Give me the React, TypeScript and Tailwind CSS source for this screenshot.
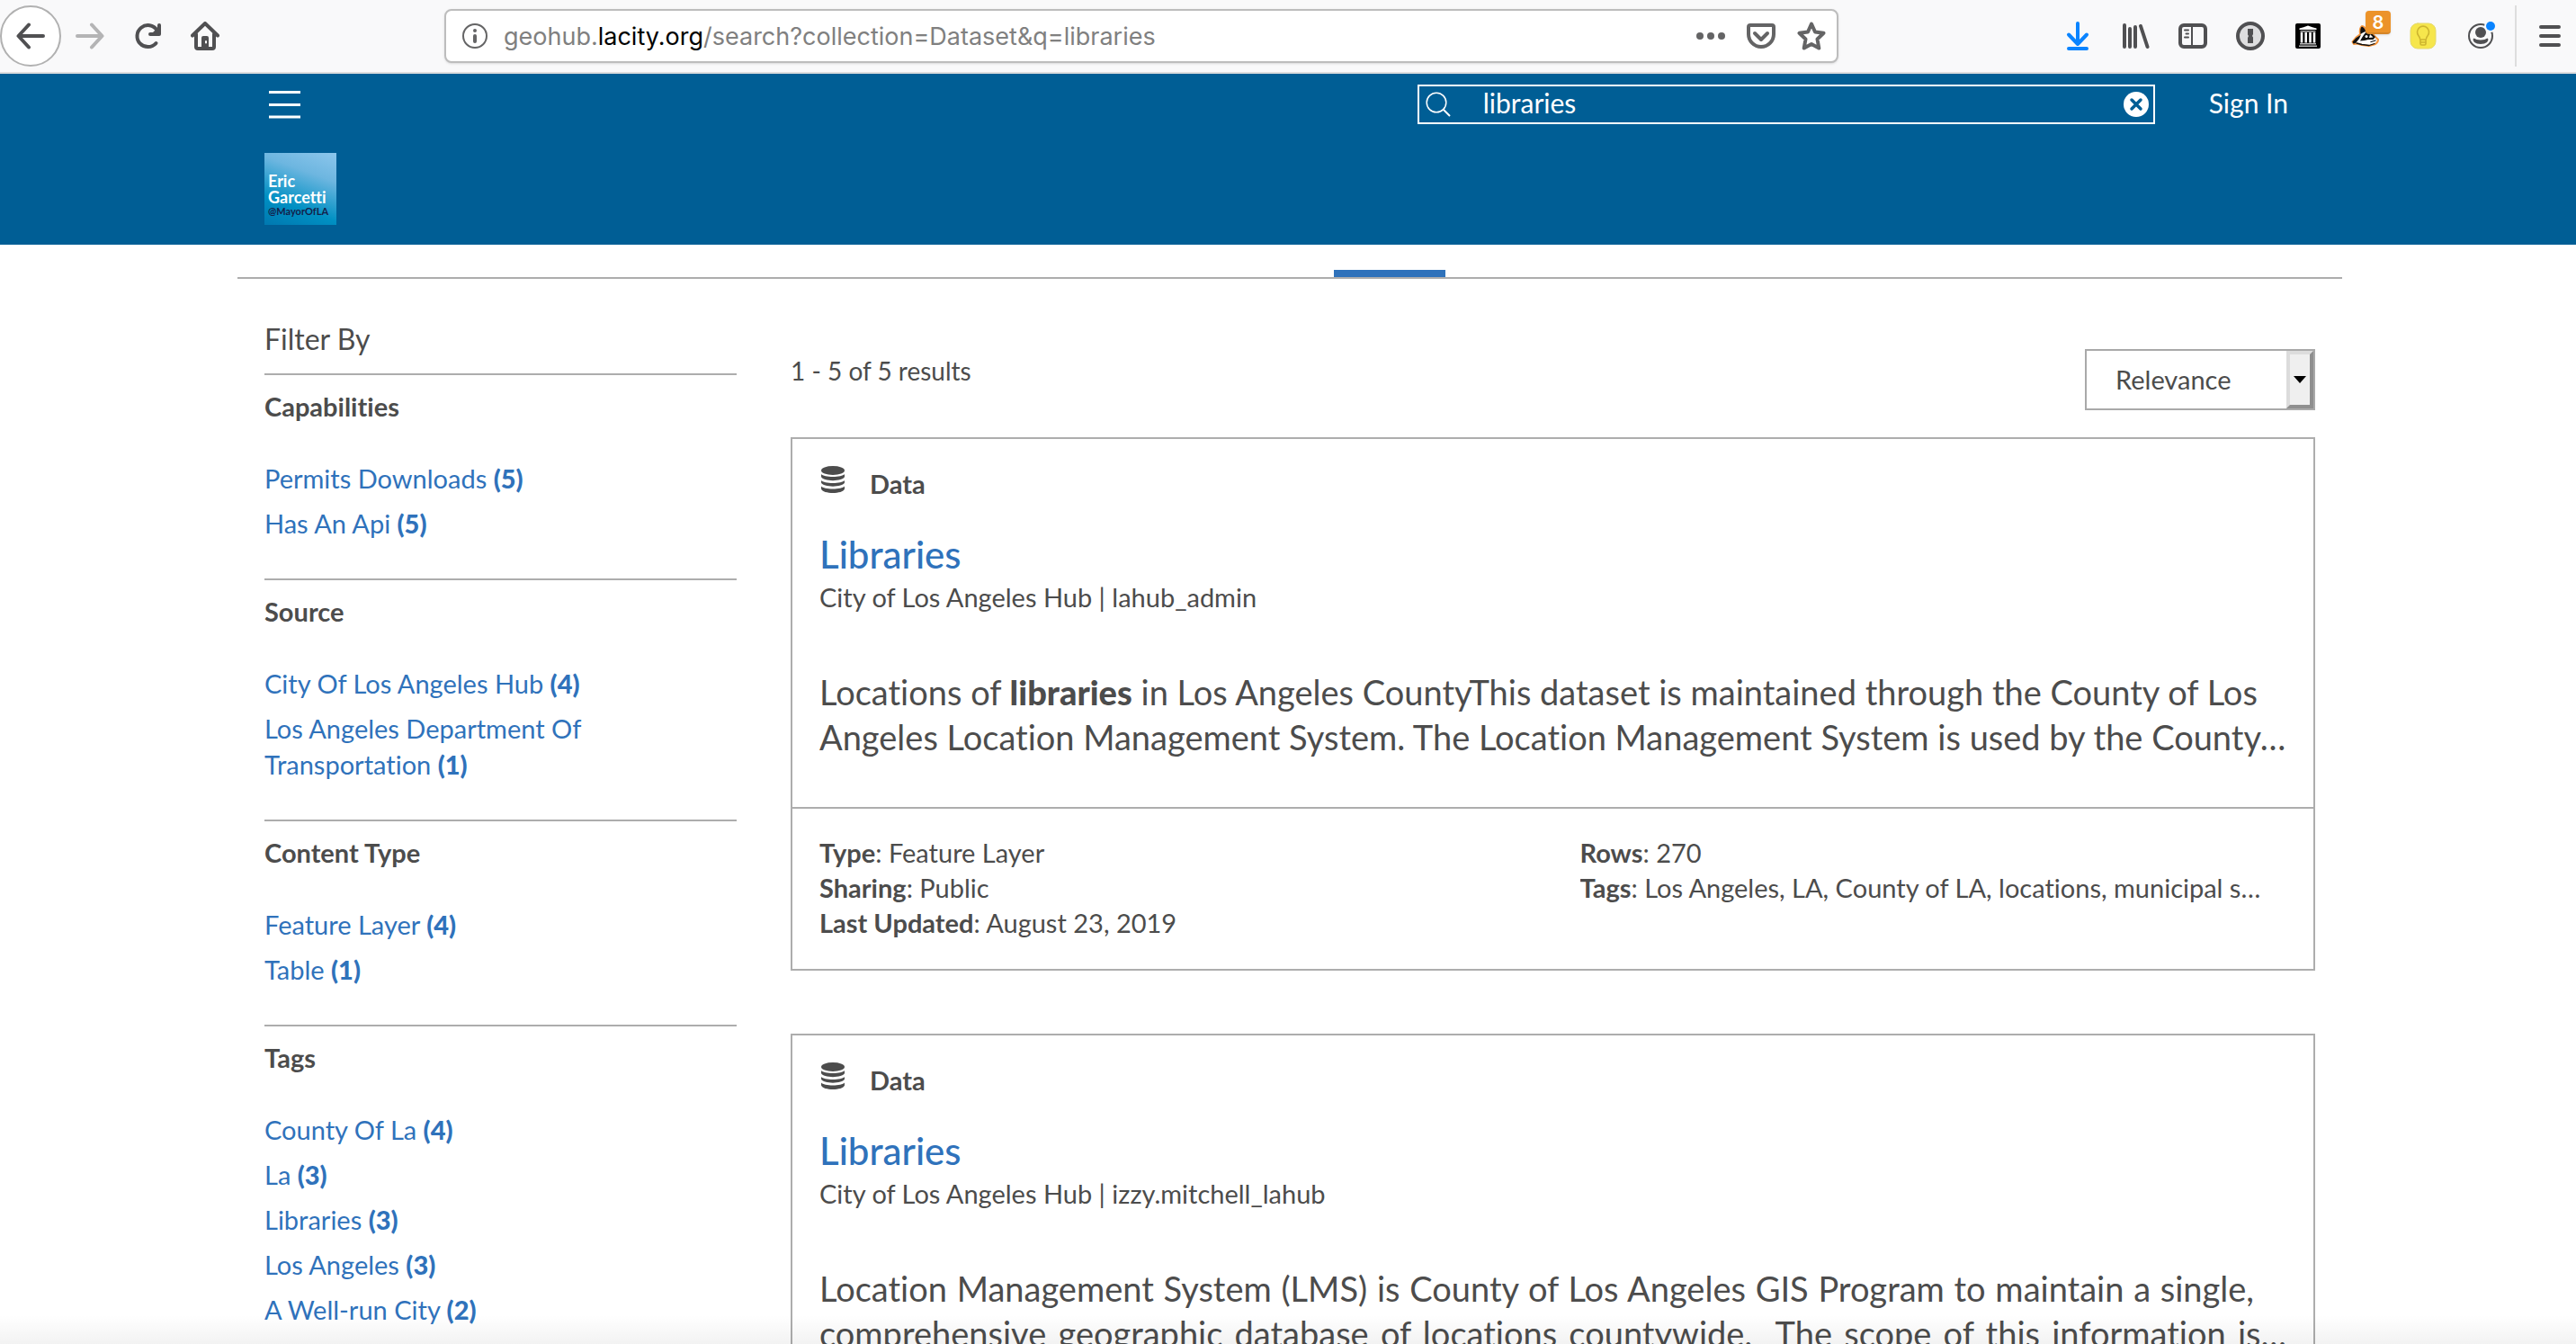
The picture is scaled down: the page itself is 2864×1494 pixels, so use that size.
import type { ReactNode } from "react";

type Facet = { title: string; items: { label: string; count: number }[] };

const facets: Facet[] = [
  {
    title: "Capabilities",
    items: [
      { label: "Permits Downloads", count: 5 },
      { label: "Has An Api", count: 5 },
    ],
  },
  {
    title: "Source",
    items: [
      { label: "City Of Los Angeles Hub", count: 4 },
      { label: "Los Angeles Department Of Transportation", count: 1 },
    ],
  },
  {
    title: "Content Type",
    items: [
      { label: "Feature Layer", count: 4 },
      { label: "Table", count: 1 },
    ],
  },
  {
    title: "Tags",
    items: [
      { label: "County Of La", count: 4 },
      { label: "La", count: 3 },
      { label: "Libraries", count: 3 },
      { label: "Los Angeles", count: 3 },
      { label: "A Well-run City", count: 2 },
    ],
  },
];

function ToolButton({ label, children }: { label: string; children: ReactNode }) {
  return (
    <button type="button" aria-label={label} className="relative flex h-[68px] w-16 shrink-0 items-center justify-center">
      {children}
    </button>
  );
}

function Icon({ children }: { children: ReactNode }) {
  return (
    <svg viewBox="0 0 32 32" className="size-8" fill="none" strokeLinecap="round" strokeLinejoin="round" aria-hidden="true">
      {children}
    </svg>
  );
}

function BrowserBar() {
  return (
    <div className="flex shrink-0 items-center border-b-2 border-[#dddddd] bg-[#f9f9fa] py-1.5">
      <button
        type="button"
        aria-label="Back"
        className="flex size-[68px] shrink-0 items-center justify-center rounded-full border-2 border-[#b1b1b1] bg-white"
      >
        <Icon>
          <path d="M30 16H3M14 3.500L2.500 16L14 28.500" stroke="#505052" strokeWidth="4" />
        </Icon>
      </button>
      <ToolButton label="Forward">
        <Icon>
          <path d="M2 16H29M18 3.500L29.500 16L18 28.500" stroke="#b4b4b5" strokeWidth="4" />
        </Icon>
      </ToolButton>
      <ToolButton label="Reload">
        <Icon>
          <path d="M25.500 24A12 12 0 1 1 26.500 9.500" stroke="#505052" strokeWidth="4" />
          <path d="M29 4V14H19" stroke="#505052" strokeWidth="4" />
          <path d="M29 5V14H20Z" fill="#505052" />
        </Icon>
      </ToolButton>
      <ToolButton label="Home">
        <Icon>
          <path d="M2 15.500L16 2L30 15.500" stroke="#505052" strokeWidth="4" />
          <path d="M6 14V28Q6 30 8 30H24Q26 30 26 28V14" stroke="#505052" strokeWidth="4" />
          <path d="M12 29V18Q12 16 14 16H18Q20 16 20 18V29Z" fill="#505052" />
          <path d="M17 22v1.500" stroke="#fff" strokeWidth="2" />
        </Icon>
      </ToolButton>
      <div className="w-[234px] shrink" />
      <div className="flex h-[60px] flex-1 items-center rounded-lg border-2 border-[#bdbdbd] bg-white pr-3 pl-[18px] shadow-sm">
        <svg viewBox="0 0 28 28" className="size-7 shrink-0" fill="none" aria-hidden="true">
          <circle cx="14" cy="14" r="13" stroke="#646465" strokeWidth="2" />
          <circle cx="14" cy="8" r="2" fill="#646465" />
          <path d="M14 14V20" stroke="#646465" strokeWidth="4" strokeLinecap="round" />
        </svg>
        <p className="ml-[18px] flex-1 pt-0.5 font-['Inter',sans-serif] text-[27px] leading-10 text-[#808080]">
          geohub.<span className="text-black">lacity.org</span>/search?collection=Dataset&amp;q=libraries
        </p>
        <div className="flex gap-6">
          <button type="button" aria-label="Page actions">
            <Icon>
              <circle cx="4" cy="16" r="4" fill="#646465" />
              <circle cx="16" cy="16" r="4" fill="#646465" />
              <circle cx="28" cy="16" r="4" fill="#646465" />
            </Icon>
          </button>
          <button type="button" aria-label="Save to Pocket">
            <Icon>
              <path d="M4 4H28Q30 4 30 6V14A14 14 0 0 1 2 14V6Q2 4 4 4Z" stroke="#646465" strokeWidth="4" />
              <path d="M9 13L16 20L23 13" stroke="#646465" strokeWidth="4" />
            </Icon>
          </button>
          <button type="button" aria-label="Bookmark">
            <Icon>
              <path
                d="M16 2.500L20 11.500L29.500 12.800L22.500 19.500L24.300 29.500L16 25L7.700 29.500L9.500 19.500L2.500 12.800L12 11.500Z"
                stroke="#646465"
                strokeWidth="4"
              />
            </Icon>
          </button>
        </div>
      </div>
      <div className="w-[234px] shrink" />
      <ToolButton label="Downloads">
        <Icon>
          <path d="M16 2V24M6 14.500L16 25L26 14.500M6 30H26" stroke="#0a84ff" strokeWidth="4" />
        </Icon>
      </ToolButton>
      <ToolButton label="Library">
        <Icon>
          <path d="M4 4V28M10 8V28M16 6V28M22 5L29.500 28" stroke="#505052" strokeWidth="4" />
        </Icon>
      </ToolButton>
      <ToolButton label="Sidebars">
        <Icon>
          <rect x="2" y="4" width="28" height="24" rx="4" stroke="#505052" strokeWidth="4" />
          <path d="M15 5V27" stroke="#505052" strokeWidth="2" />
          <path d="M7 9.500H11M8.500 13.500H11M7 17.500H11" stroke="#505052" strokeWidth="2" />
        </Icon>
      </ToolButton>
      <ToolButton label="Password manager">
        <Icon>
          <circle cx="16" cy="16" r="14" fill="#dededf" stroke="#505052" strokeWidth="4" />
          <path d="M13 8H19V14L18 16L19 17.500V24H13V18L14 16L13 14.500Z" fill="#505052" />
        </Icon>
      </ToolButton>
      <ToolButton label="Web archive">
        <Icon>
          <rect x="2" y="2" width="28" height="28" rx="2" fill="#000" />
          <path d="M6.500 7.500Q11 6.500 16 4.500Q21 6.500 25.500 7.500V9H6.500Z" fill="#fff" />
          <path d="M9 12V23.500M13.700 12V23.500M18.500 12V23.500M23 12V23.500" stroke="#fff" strokeWidth="2.600" strokeLinecap="butt" />
          <path d="M7.500 10.700H24.500M7 24.800H25M6 27.300H26" stroke="#b8b8b8" strokeWidth="1.500" strokeLinecap="butt" />
        </Icon>
      </ToolButton>
      <ToolButton label="Privacy Badger">
        <Icon>
          <path
            d="M1.500 22.500Q5 17 10 14Q9 7 12 5Q16 6 16.500 11L22 12L30 20Q30 23 27 25L20 27L12 26L7 24.500L3 25Z"
            fill="#fff"
            stroke="#f5943a"
            strokeWidth="2"
          />
          <path d="M10.500 14Q9.500 7 12 5.500Q15.500 7 16 11Q13 12 10.500 14Z" fill="#111" />
          <path d="M1.500 22.500Q5 17.500 11 14.500L9 19L5 24L2.500 24.500Z" fill="#111" />
          <path d="M10 21.500Q14 14 17 11.500L22 12.500L27 17L24.500 20L19 20L15 21Z" fill="#111" />
          <circle cx="17" cy="16.500" r="1.500" fill="#fff" />
          <path d="M21 14L24.500 17.500L20 18Z" fill="#fff" />
          <path d="M6 24L12 25.500L20 26.500L26 24.500M22 22.500L27 21" stroke="#111" strokeWidth="1.300" />
        </Icon>
        <span className="absolute top-1.5 right-1 flex h-[26px] w-7 items-center justify-center rounded border-b-2 border-[#d58528] bg-[#ec9329] pt-0.5 font-['Inter',sans-serif] text-xl font-semibold text-white shadow-sm">
          8
        </span>
      </ToolButton>
      <ToolButton label="Tips">
        <Icon>
          <rect x="2" y="2" width="28" height="28" rx="8" fill="#f6e64c" stroke="#e5d96b" strokeWidth="1" />
          <path
            d="M12.800 20Q12.500 17.500 10.800 15.500A6.500 6.500 0 1 1 21.200 15.500Q19.500 17.500 19.200 20ZM13 20V24.500Q13 26 14.500 26H17.500Q19 26 19 24.500V20M13 23H19"
            stroke="#cdb52f"
            strokeWidth="1.600"
          />
        </Icon>
      </ToolButton>
      <ToolButton label="Account">
        <Icon>
          <circle cx="16" cy="16" r="13" stroke="#505052" strokeWidth="2" />
          <circle cx="16" cy="12" r="6" fill="#505052" />
          <path d="M8.500 18.500Q11 20.500 16 20.500Q21 20.500 23.500 18.500Q25.500 20 23 23Q20.500 25 16 25Q11.500 25 9 23Q6.500 20 8.500 18.500Z" fill="#505052" />
          <circle cx="27" cy="5" r="7" fill="#f9f9fa" />
          <circle cx="27" cy="5" r="5" fill="#0a84ff" />
        </Icon>
      </ToolButton>
      <div className="ml-1.5 h-[68px] w-0.5 shrink-0 bg-[#dddddd]" />
      <div className="shrink-0 pl-2">
        <button type="button" aria-label="Open menu" className="flex h-[68px] w-[58px] items-center justify-center">
          <Icon>
            <path d="M6 6H26M6 16H26M6 26H26" stroke="#505052" strokeWidth="4" />
          </Icon>
        </button>
      </div>
    </div>
  );
}

function SiteHeader() {
  return (
    <header className="bg-[#005e95] pl-1">
      <div className="mx-auto max-w-[2340px] px-[30px] pt-3 pb-[22px]">
        <div className="flex h-11 items-center">
          <button type="button" aria-label="Menu" className="p-[5px]">
            <svg viewBox="0 0 35 32" className="h-8 w-[35px]" fill="none" aria-hidden="true">
              <path d="M0 2.500H35M0 16.500H35M0 30H35" stroke="#fff" strokeWidth="3" />
            </svg>
          </button>
          <div className="ml-auto flex h-11 w-[820px] items-center border-2 border-white pr-[5px] pl-[7px]">
            <svg viewBox="0 0 28 28" className="size-7 shrink-0" fill="none" aria-hidden="true">
              <circle cx="12" cy="12" r="10.800" stroke="#fff" strokeWidth="1.500" />
              <path d="M19.500 19.500L27 27" stroke="#fff" strokeWidth="2" />
            </svg>
            <input
              aria-label="Search"
              defaultValue="libraries"
              className="ml-9 h-9 min-w-0 flex-1 bg-transparent pb-1 text-[30px] text-white outline-none"
            />
            <button type="button" aria-label="Clear search">
              <svg viewBox="0 0 28 28" className="size-7" aria-hidden="true">
                <circle cx="14" cy="14" r="14" fill="#fff" />
                <path d="M9 9L19 19M19 9L9 19" stroke="#005e95" strokeWidth="3.500" strokeLinecap="round" />
              </svg>
            </button>
          </div>
          <a href="#signin" className="ml-[60px] pr-[30px] pb-1 text-[30px] leading-10 text-white">
            Sign In
          </a>
        </div>
        <a
          href="#home"
          className="mt-8 flex size-20 flex-col justify-end bg-[linear-gradient(200deg,#8cc6ec_0%,#6db6e0_30%,#0090c3_70%,#0078b0_100%)] pb-2 pl-1 font-bold"
        >
          <span className="text-[18px] leading-[18px] text-white">Eric</span>
          <span className="text-[18px] leading-[18px] text-white">Garcetti</span>
          <span className="text-[11px] leading-[14px] text-[#14204a]">@MayorOfLA</span>
        </a>
      </div>
    </header>
  );
}

function FacetSection({ title, items }: Facet) {
  return (
    <section className="border-t-2 border-[#adadad] pt-[15px] pb-[41px]">
      <h3 className="text-[29px] leading-10 font-bold">{title}</h3>
      <ul className="mt-10 flex flex-col gap-2.5 text-[29px] leading-10 text-[#2f72bb]">
        {items.map((item) => (
          <li key={item.label} className="max-w-[400px]">
            <a href="#filter" className="block">
              {`${item.label} `}
              <strong className="font-black">{`(${item.count})`}</strong>
            </a>
          </li>
        ))}
      </ul>
    </section>
  );
}

function DataIcon() {
  return (
    <svg viewBox="0 0 26 30" className="ml-0.5 h-[30px] w-[26px]" fill="#4c4c4c" aria-hidden="true">
      <ellipse cx="13" cy="5" rx="13" ry="5" />
      <path d="M0 9C3 13 23 13 26 9V12C24 17.500 2 17.500 0 12Z" />
      <path d="M0 16C3 20 23 20 26 16V18.500C24 24 2 24 0 18.500Z" />
      <path d="M0 22.500C3 26.500 23 26.500 26 22.500V25.500C24 31.500 2 31.500 0 25.500Z" />
    </svg>
  );
}

function ResultCard({ owner, children, details }: { owner: string; children: ReactNode; details?: ReactNode }) {
  return (
    <article className="border-2 border-[#adadad]">
      <div className="px-[30px] pt-[30px] pb-[53px]">
        <div className="flex items-start gap-7">
          <DataIcon />
          <span className="text-[29px] leading-10 font-bold">Data</span>
        </div>
        <h2 className="mt-[34px] text-[42px] leading-[48px] font-medium text-[#2f72bb]">
          <a href="#libraries">Libraries</a>
        </h2>
        <p className="mt-1 text-[29px] leading-10">City of Los Angeles Hub | {owner}</p>
        <div className="mt-[60px] text-[38px] leading-[50px]">{children}</div>
      </div>
      {details}
    </article>
  );
}

function Detail({ name, value }: { name: string; value: string }) {
  return (
    <div className="truncate">
      <dt className="inline font-bold">{name}</dt>
      <dd className="inline">: {value}</dd>
    </div>
  );
}

export default function App() {
  return (
    <div className="flex h-screen flex-col overflow-hidden bg-white font-['Lato',sans-serif] text-[#4c4c4c] [font-variant-ligatures:none]">
      <BrowserBar />
      <div className="relative min-h-0 flex-1 overflow-hidden">
        <SiteHeader />
        <div className="pl-1">
          <nav aria-label="Content" className="mx-auto flex max-w-[2340px] justify-center border-b-2 border-[#adadad] pt-7 pl-[222px]">
            <a href="#data" aria-label="Data" className="h-2 w-[124px] bg-[#2f72bb]" />
          </nav>
          <div className="mx-auto flex max-w-[2340px] items-start gap-[60px] px-[30px]">
            <aside className="w-[525px] shrink-0 pt-[47px]">
              <h2 className="pb-[18px] text-[32px] leading-10">Filter By</h2>
              {facets.map((facet) => (
                <FacetSection key={facet.title} {...facet} />
              ))}
            </aside>
            <main className="min-w-0 flex-1 pt-[78px]">
              <div className="mb-[30px] flex items-start justify-between">
                <p className="mt-1 text-[28px] leading-10">1 - 5 of 5 results</p>
                <div className="relative h-[68px] w-64">
                  <select
                    aria-label="Sort by"
                    className="size-full appearance-none border-2 border-[#a9a9a9] bg-white pl-8 text-[29px]"
                  >
                    <option>Relevance</option>
                  </select>
                  <span className="pointer-events-none absolute inset-y-0.5 right-0.5 flex w-[30px] items-center justify-center border-4 border-t-[#dcdcdc] border-r-[#8f8f8f] border-b-[#8f8f8f] border-l-[#dcdcdc] bg-[#efefef]">
                    <svg viewBox="0 0 14 8" className="h-2 w-3.5" aria-hidden="true">
                      <path d="M0 0H14L7 8Z" fill="#000" />
                    </svg>
                  </span>
                </div>
              </div>
              <div className="flex flex-col gap-[70px]">
                <ResultCard
                  owner="lahub_admin"
                  details={
                    <dl className="grid grid-cols-2 border-t-2 border-[#adadad] pt-[29px] pb-8 text-[29px] leading-[39px]">
                      <div className="min-w-0 px-[30px]">
                        <Detail name="Type" value="Feature Layer" />
                        <Detail name="Sharing" value="Public" />
                        <Detail name="Last Updated" value="August 23, 2019" />
                      </div>
                      <div className="min-w-0 px-[30px]">
                        <Detail name="Rows" value="270" />
                        <Detail name="Tags" value="Los Angeles, LA, County of LA, locations, municipal s…" />
                      </div>
                    </dl>
                  }
                >
                  <p className="whitespace-nowrap">
                    Locations of <strong className="font-black">libraries</strong> in Los Angeles CountyThis dataset is maintained
                    through the County of Los
                    <br />
                    Angeles Location Management System. The Location Management System is used by the County…
                  </p>
                </ResultCard>
                <ResultCard owner="izzy.mitchell_lahub">
                  <p className="text-justify [text-align-last:justify]">
                    <span className="block pr-9">
                      Location Management System (LMS) is County of Los Angeles GIS Program to maintain a single,
                    </span>
                    <span className="block">
                      comprehensive geographic database of locations countywide.&nbsp; The scope of this information is…
                    </span>
                  </p>
                </ResultCard>
              </div>
            </main>
          </div>
        </div>
        <div className="pointer-events-none absolute inset-x-0 bottom-0 h-8 bg-linear-to-b from-transparent to-black/5" />
      </div>
    </div>
  );
}
